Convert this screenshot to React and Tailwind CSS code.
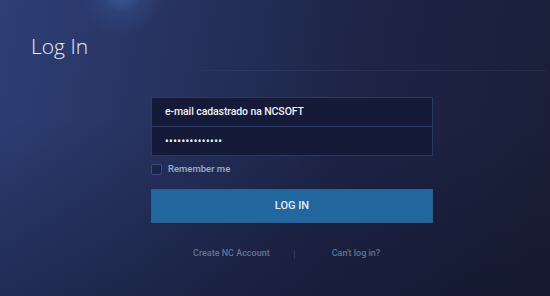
export default function App() {
  return (
    <div
      className="relative h-[296px] w-[550px] overflow-hidden bg-[#1d2442] bg-[image:radial-gradient(circle_at_122px_-8px,rgba(90,150,225,0.45)_0px,rgba(60,110,190,0.2)_20px,transparent_44px),linear-gradient(to_bottom,transparent_40%,rgba(12,16,36,0.35)_100%),linear-gradient(100deg,#2e3f76_0%,#27325f_30%,#1d2446_62%,#1a1e37_100%)]"
      style={{ fontFamily: 'Roboto, "Liberation Sans", sans-serif' }}
    >
      <h1
        className="pl-[31px] pt-[33px] text-[21px] font-light leading-[26px] text-[#e6ecf6]"
        style={{ fontFamily: '"Open Sans", Roboto, sans-serif' }}
      >
        Log In
      </h1>

      <div className="mt-[11px] ml-[180px] mr-[4px] h-px bg-[linear-gradient(to_right,transparent,rgba(120,140,200,0.13)_20%,rgba(120,140,200,0.11)_100%)]" />

      <form className="ml-[151px] mt-[26px] w-[282px]" onSubmit={(e) => e.preventDefault()}>
        <div className="border border-[#2a3866] bg-[#141a37]">
          <div className="flex h-[29px] items-center border-b border-[#2a3866] pl-[13px] text-[10.5px] font-medium tracking-[-0.1px] text-[#eef1f8]">
            e-mail cadastrado na NCSOFT
          </div>
          <div className="flex h-[28px] items-center pl-[13px] text-[10px] font-bold tracking-[0.5px] text-[#eef1f8]">
            ••••••••••••••
          </div>
        </div>

        <label className="mt-[6px] flex items-center gap-[6px]">
          <span className="h-[11px] w-[11px] rounded-[2px] border border-[#3a4b80] bg-[#1a2348]" />
          <span className="text-[9.5px] font-medium text-[#a0aed0]">Remember me</span>
        </label>

        <button
          type="submit"
          className="mt-[13px] flex h-[34px] w-full items-center justify-center border border-[#2a5f94] bg-[#23679f] text-[11px] font-medium text-[#e4ecf5]"
        >
          LOG IN
        </button>

        <div className="mt-[24px] flex items-center text-[9px] font-medium text-[#62749a]">
          <a className="ml-[42px]">Create NC Account</a>
          <span className="ml-[24px] h-[9px] w-px bg-[#2c3655]" />
          <a className="ml-[37px]">Can't log in?</a>
        </div>
      </form>
    </div>
  );
}
